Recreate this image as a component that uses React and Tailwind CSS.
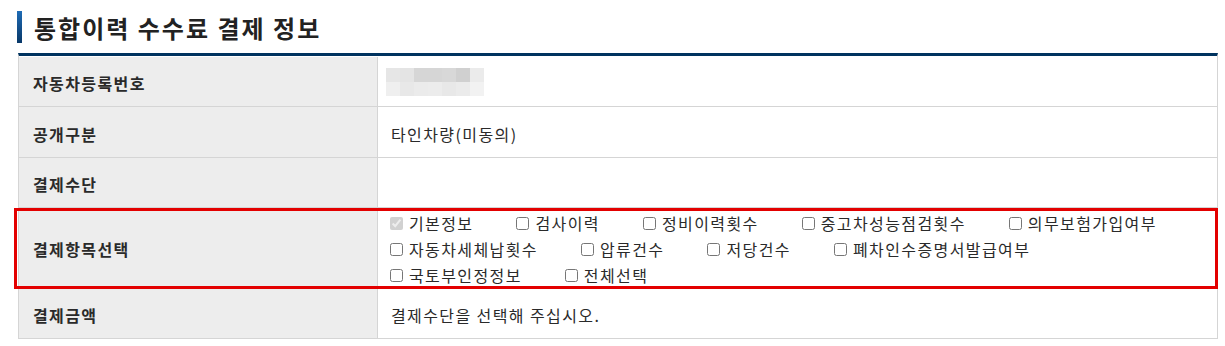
const blurCells = [
  ["#e6e6e6", "#e4e4e4", "#d6d6d6", "#d6d6d6", "#d8d8d8", "#d0d0d0", "#ebebeb"],
  ["#efefef", "#e8e8e8", "#ebebeb", "#ececec", "#e8e8e8", "#ebebeb", "#f2f2f2"],
];

const itemLines = [
  [
    { label: "기본정보", checked: true, disabled: true },
    { label: "검사이력" },
    { label: "정비이력횟수" },
    { label: "중고차성능점검횟수" },
    { label: "의무보험가입여부" },
  ],
  [
    { label: "자동차세체납횟수" },
    { label: "압류건수" },
    { label: "저당건수" },
    { label: "폐차인수증명서발급여부" },
  ],
  [{ label: "국토부인정정보" }, { label: "전체선택" }],
];

function Row({ label, children, className = "h-[51px]" }) {
  return (
    <div className={`flex border-b border-[#d5d5d5] ${className}`}>
      <div className="flex w-[359px] shrink-0 items-center border-r border-[#d5d5d5] bg-[#ededed] pl-[14px] pt-[3px] text-[16px] font-bold tracking-[1.4px] text-[#2a2a2a]">
        {label}
      </div>
      <div className="flex flex-1 items-center pt-[3px] text-[16px] tracking-[1.4px] text-[#2a2a2a]">
        {children}
      </div>
    </div>
  );
}

function Blurred() {
  return (
    <div className="-mt-[3px] ml-[8px] flex flex-col">
      {blurCells.map((line, i) => (
        <div key={i} className="flex">
          {line.map((c, j) => (
            <div key={j} className="h-[14px] w-[14px]" style={{ backgroundColor: c }} />
          ))}
        </div>
      ))}
    </div>
  );
}

export default function App() {
  return (
    <div
      className="min-h-[346px] bg-white"
      style={{ fontFamily: '"Noto Sans CJK KR", "Noto Sans", sans-serif' }}
    >
      <div className="ml-[17px] flex items-center pt-[10px]">
        <div className="h-[32px] w-[5px] bg-gradient-to-b from-[#1f6cb6] to-[#083868]" />
        <h2 className="ml-[12px] pt-[2px] text-[24px] font-bold leading-[32px] tracking-[2px] text-[#222]">
          통합이력 수수료 결제 정보
        </h2>
      </div>

      <div className="ml-[18px] mt-[9px] w-[1200px] border-x border-t-[3px] border-x-[#d5d5d5] border-t-[#00335f]">
        <Row label="자동차등록번호" className="h-[51px] pt-[1px]">
          <Blurred />
        </Row>
        <Row label="공개구분">
          <span className="pl-[13px]">타인차량(미동의)</span>
        </Row>
        <Row label="결제수단" className="h-[50px]" />
        <div className="relative">
          <Row label="결제항목선택" className="h-[80px]">
            <div className="flex flex-col pl-[12px] leading-[26px]">
              {itemLines.map((line, i) => (
                <div key={i} className="flex gap-x-[43px]">
                  {line.map((item) => (
                    <label key={item.label} className="flex items-center gap-[6px]">
                      <input
                        type="checkbox"
                        defaultChecked={item.checked}
                        disabled={item.disabled}
                        className="m-0 h-[13px] w-[13px]"
                      />
                      <span>{item.label}</span>
                    </label>
                  ))}
                </div>
              ))}
            </div>
          </Row>
          <div className="pointer-events-none absolute -bottom-[1px] -left-[5px] -right-[1px] top-0 border-[3px] border-[#e30000]" />
        </div>
        <Row label="결제금액" className="h-[51px]">
          <span className="pl-[13px]">결제수단을 선택해 주십시오.</span>
        </Row>
      </div>
    </div>
  );
}
